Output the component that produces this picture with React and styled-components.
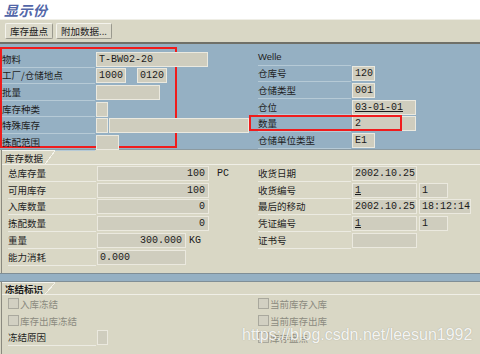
import React from "react";
import styled, { createGlobalStyle } from "styled-components";

const GlobalStyle = createGlobalStyle`
  html, body {
    margin: 0;
    padding: 0;
    background: #d9d7c5;
  }
  body {
    font-family: "Noto Sans CJK SC", "Liberation Sans", sans-serif;
  }
`;

const Screen = styled.div`
  width: 480px;
  height: 354px;
  overflow: hidden;
  position: relative;
  background: #d9d7c5;
  display: flex;
  flex-direction: column;
`;

const TitleBar = styled.div`
  height: 19px;
  flex-shrink: 0;
  background: #ffffff;
  display: flex;
  align-items: center;
  padding-left: 4px;
`;

const Title = styled.h1`
  margin: 0;
  font-size: 14px;
  font-style: italic;
  font-weight: 700;
  color: #5266a8;
  letter-spacing: 0.5px;
`;

const Toolbar = styled.div`
  height: 22px;
  flex-shrink: 0;
  border-top: 1px solid #efeee6;
  border-bottom: 2px solid #707068;
  background: #d9d7c5;
  display: flex;
  align-items: center;
  gap: 3px;
  padding-left: 5px;
`;

const ToolButton = styled.button`
  height: 16px;
  padding: 0 4px;
  font-family: "Noto Sans CJK SC", sans-serif;
  font-size: 9.5px;
  color: #202020;
  background: #dcdacb;
  border: 1px solid #f4f3ec;
  border-right-color: #9a998e;
  border-bottom-color: #9a998e;
  border-radius: 2px;
  display: flex;
  align-items: center;
`;

const TopPanel = styled.div`
  height: 105px;
  flex-shrink: 0;
  background: #95b0c3;
  display: flex;
  border-bottom: 1px solid #8c9aa0;
`;

const LeftCol = styled.div`
  width: ${p => p.$w}px;
  flex-shrink: 0;
  display: flex;
  flex-direction: column;
  padding-top: ${p => p.$pt || 0}px;
  padding-left: ${p => p.$pl || 0}px;
  box-sizing: border-box;
`;

const MarkBox = styled.div`
  margin-top: 3px;
  width: 177px;
  height: 101px;
  box-sizing: border-box;
  border: 2px solid #f01c1c;
  padding-top: 2px;
  display: flex;
  flex-direction: column;
`;

const RightCol = styled.div`
  flex: 1;
  display: flex;
  flex-direction: column;
  padding-top: ${p => p.$pt || 0}px;
  padding-left: ${p => p.$pl || 0}px;
`;

const Row = styled.div`
  height: ${p => p.$h || 16.6}px;
  display: flex;
  align-items: center;
  position: relative;
  flex-shrink: 0;

  ${p => p.$mark && `
    &::after {
      content: "";
      position: absolute;
      left: -9px;
      top: 0;
      width: 153px;
      height: 16px;
      box-sizing: border-box;
      border: 2px solid #f01c1c;
      pointer-events: none;
    }
  `}
`;

const Label = styled.div`
  width: ${p => p.$w}px;
  flex-shrink: 0;
  align-self: stretch;
  display: flex;
  align-items: center;
  box-sizing: border-box;
  font-size: 9.5px;
  color: #1e1e1e;
  border-bottom: 1px solid ${p => (p.$blue ? "#b6cad6" : "#ecebe2")};
  margin-right: 1px;
  white-space: nowrap;
  font-family: ${p => (p.$latin ? '"Liberation Sans", sans-serif' : '"Noto Sans CJK SC", sans-serif')};
`;

const Field = styled.div`
  width: ${p => p.$w}px;
  height: 15px;
  flex-shrink: 0;
  box-sizing: border-box;
  background: #cfcdbe;
  border: 1px solid #ebe9df;
  margin-right: ${p => p.$mr || 0}px;
  font-family: "Liberation Mono", monospace;
  font-size: 10px;
  color: #1a1a1a;
  display: flex;
  align-items: center;
  justify-content: ${p => (p.$right ? "flex-end" : "flex-start")};
  padding: 0 3px 0 2px;
  white-space: nowrap;
  text-decoration: ${p => (p.$link ? "underline" : "none")};
`;

const Unit = styled.span`
  font-family: "Liberation Mono", monospace;
  font-size: 10px;
  color: #1a1a1a;
  margin-left: ${p => p.$ml || 3}px;
`;

const Section = styled.div`
  position: relative;
  display: flex;
  flex-direction: column;
  border-left: 1px solid #8a897f;
  margin-left: 1px;
  height: ${p => p.$h}px;
  flex-shrink: 0;
  box-sizing: border-box;
`;

const TabRow = styled.div`
  display: flex;
  height: ${p => p.$h || 14}px;
  flex-shrink: 0;
  border-bottom: 1px solid #f0efe7;
`;

const Tab = styled.div`
  position: relative;
  height: 100%;
  padding: 0 12px 0 3px;
  box-sizing: border-box;
  border-top: 1px solid #f4f3ec;
  font-size: 9.5px;
  font-weight: ${p => (p.$bold ? 700 : 400)};
  color: #1a1a1a;
  display: flex;
  align-items: center;
  background: linear-gradient(
    to top left,
    #d9d7c5 0,
    #d9d7c5 calc(50% - 0.5px),
    #f4f3ec calc(50% - 0.5px),
    #f4f3ec calc(50% + 0.5px),
    transparent calc(50% + 0.5px)
  ) right / 10px 100% no-repeat;
`;

const Columns = styled.div`
  display: flex;
  padding-top: ${p => p.$pt || 0}px;
`;

const Band = styled.div`
  height: 9px;
  flex-shrink: 0;
  background: #95b0c3;
  border-top: 1px solid #7f8e96;
  border-bottom: 1px solid #7f8e96;
  box-sizing: border-box;
`;

const Check = styled.div`
  display: flex;
  align-items: center;
  font-size: 9.5px;
  color: #8b8a80;
  gap: 1px;
`;

const Box = styled.span`
  width: 9px;
  height: 9px;
  border: 1px solid #a9a89d;
  background: #d2d0c2;
  display: inline-block;
`;

const Watermark = styled.div`
  position: absolute;
  left: 242px;
  top: 326px;
  font-family: "Liberation Sans", sans-serif;
  font-size: 16px;
  color: rgba(255, 255, 255, 0.9);
  text-shadow: 0 0 1px rgba(120, 120, 110, 0.6);
  pointer-events: none;
  white-space: nowrap;
`;

const topLeft = [
  { label: "物料", fields: [{ w: 112, v: "T-BW02-20" }] },
  { label: "工厂/仓储地点", fields: [{ w: 30, v: "1000", mr: 11 }, { w: 30, v: "0120" }] },
  { label: "批量", fields: [{ w: 64 }] },
  { label: "库存种类", fields: [{ w: 12 }] },
  { label: "特殊库存", fields: [{ w: 12, mr: 1 }, { w: 140 }] },
  { label: "拣配范围", fields: [{ w: 23 }] },
];

const topRight = [
  { label: "仓库号", fields: [{ w: 23, v: "120" }] },
  { label: "仓储类型", fields: [{ w: 23, v: "001" }] },
  { label: "仓位", fields: [{ w: 64, v: "03-01-01", link: true }] },
  { label: "数量", fields: [{ w: 64, v: "2" }], mark: true },
  { label: "仓储单位类型", fields: [{ w: 23, v: "E1" }] },
];

const stockLeft = [
  { label: "总库存量", fields: [{ w: 112, v: "100", right: true }], unit: "PC", ml: 8 },
  { label: "可用库存", fields: [{ w: 112, v: "100", right: true }] },
  { label: "入库数量", fields: [{ w: 112, v: "0", right: true }] },
  { label: "拣配数量", fields: [{ w: 112, v: "0", right: true }] },
  { label: "重量", fields: [{ w: 89, v: "300.000", right: true }], unit: "KG", ml: 3 },
  { label: "能力消耗", fields: [{ w: 89, v: "0.000" }] },
];

const stockRight = [
  { label: "收货日期", fields: [{ w: 65, v: "2002.10.25" }] },
  { label: "收货编号", fields: [{ w: 65, v: "1", link: true, mr: 2 }, { w: 29, v: "1" }] },
  { label: "最后的移动", fields: [{ w: 65, v: "2002.10.25", mr: 2 }, { w: 52, v: "18:12:14" }] },
  { label: "凭证编号", fields: [{ w: 65, v: "1", link: true, mr: 2 }, { w: 29, v: "1" }] },
  { label: "证书号", fields: [{ w: 65 }] },
];

function FieldRow({ row, labelW, blue, h }) {
  return (
    <Row $h={h} $mark={row.mark}>
      <Label $w={labelW} $blue={blue}>{row.label}</Label>
      {row.fields.map((f, i) => (
        <Field key={i} $w={f.w} $mr={f.mr} $right={f.right} $link={f.link}>
          {f.v}
        </Field>
      ))}
      {row.unit && <Unit $ml={row.ml}>{row.unit}</Unit>}
    </Row>
  );
}

export default function App() {
  return (
    <Screen>
      <GlobalStyle />
      <TitleBar>
        <Title>显示份</Title>
      </TitleBar>
      <Toolbar>
        <ToolButton>库存盘点</ToolButton>
        <ToolButton>附加数据...</ToolButton>
      </Toolbar>

      <TopPanel>
        <LeftCol $w={249}>
          <MarkBox>
            {topLeft.map(r => (
              <FieldRow key={r.label} row={r} labelW={93} blue />
            ))}
          </MarkBox>
        </LeftCol>
        <RightCol $pt={5} $pl={9}>
          <Row>
            <Label $w={93} $blue $latin>Welle</Label>
          </Row>
          {topRight.map(r => (
            <FieldRow key={r.label} row={r} labelW={93} blue />
          ))}
        </RightCol>
      </TopPanel>

      <Section $h={123}>
        <TabRow>
          <Tab>库存数据</Tab>
        </TabRow>
        <Columns>
          <LeftCol $w={248} $pl={6}>
            {stockLeft.map(r => (
              <FieldRow key={r.label} row={r} labelW={88} h={16.8} />
            ))}
          </LeftCol>
          <RightCol $pl={8}>
            {stockRight.map(r => (
              <FieldRow key={r.label} row={r} labelW={93} h={16.8} />
            ))}
          </RightCol>
        </Columns>
      </Section>

      <Band />

      <Section $h={80}>
        <TabRow $h={12}>
          <Tab $bold>冻结标识</Tab>
        </TabRow>
        <Columns>
          <LeftCol $w={248} $pl={6}>
            <Row $h={17}>
              <Check><Box />入库冻结</Check>
            </Row>
            <Row $h={17}>
              <Check><Box />库存出库冻结</Check>
            </Row>
            <Row $h={17}>
              <Label $w={88}>冻结原因</Label>
              <Field $w={11} />
            </Row>
          </LeftCol>
          <RightCol $pl={8}>
            <Row $h={17}>
              <Check><Box />当前库存入库</Check>
            </Row>
            <Row $h={17}>
              <Check><Box />当前库存出库</Check>
            </Row>
            <Row $h={17}>
              <Check><Box />库存盘点</Check>
            </Row>
          </RightCol>
        </Columns>
      </Section>

      <Watermark>https://blog.csdn.net/leesun1992</Watermark>
    </Screen>
  );
}
